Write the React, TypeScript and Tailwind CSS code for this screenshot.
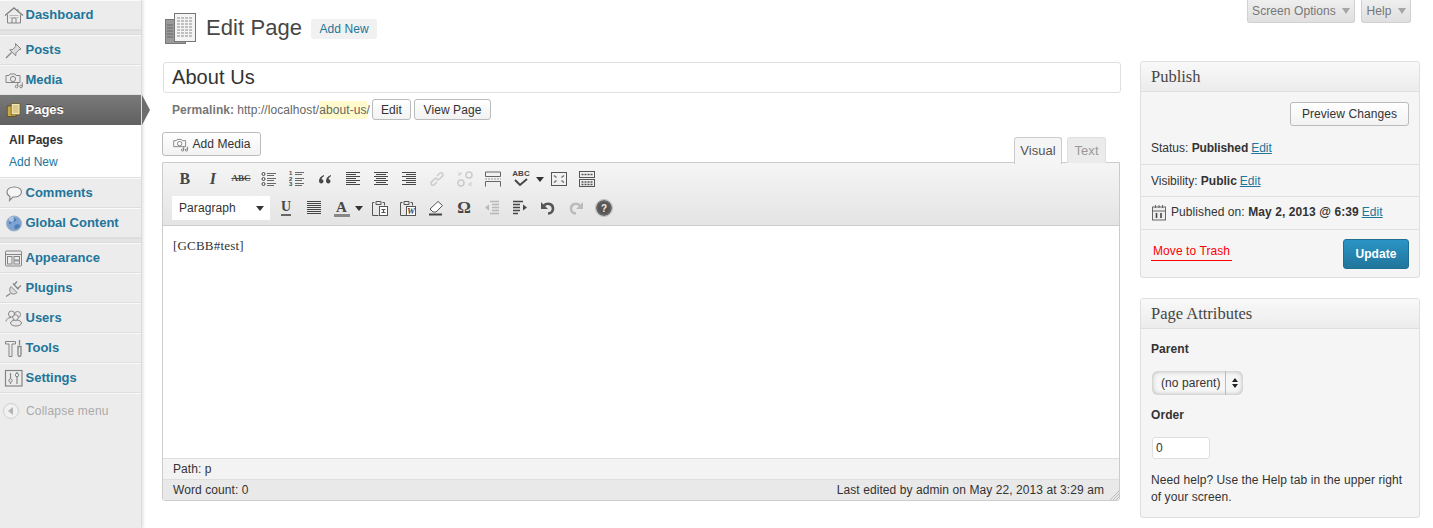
import type { ReactNode } from "react";

const sans = "font-['Liberation_Sans',Arial,sans-serif]";
const serif = "font-['Liberation_Serif',Georgia,serif]";

function Ico({ children, size = 20, box = 20, className = "" }: { children: ReactNode; size?: number; box?: number; className?: string }) {
  return (
    <svg width={size} height={size} viewBox={`0 0 ${box} ${box}`} fill="none" stroke="currentColor" strokeWidth="1" className={className}>
      {children}
    </svg>
  );
}

// sidebar icons, all grey outlines
const menuIcons: Record<string, ReactNode> = {
  dashboard: (
    <>
      <path d="M1 10.500 10 3l9 7.500" strokeWidth="1.400" />
      <path d="M3.500 9.500V18h13V9.500M8 18v-5h4v5M14 4v3" />
      <path d="M5.500 10.500h9M5.500 12.500h2M12.500 12.500h2" opacity=".5" />
    </>
  ),
  posts: (
    <>
      <path d="M11.500 3.500 17 9l-2 .8-3 3-.3 3-6-6 3-.3 3-3z" fill="#dcdcdc" />
      <path d="M7.500 12.500 2 18" strokeWidth="1.200" />
    </>
  ),
  media: (
    <>
      <path d="M2 5.500h3l1-1.500h5l1 1.500h4v7H2z" />
      <circle cx="9" cy="9" r="2.600" />
      <circle cx="12.500" cy="16.500" r="1.300" />
      <circle cx="17" cy="16.500" r="1.300" />
      <path d="M13.800 16.500V12.500M18.300 16.500V12.500" />
    </>
  ),
  comments: (
    <>
      <path d="M10.500 4c4 0 7 2.100 7 5s-3 5-7 5H9l-3.500 3.500.5-4c-2-.8-3-2.500-3-4.500 0-2.900 3-5 7-5z" fill="#f5f5f5" strokeWidth="1.100" />
    </>
  ),
  appearance: (
    <>
      <rect x="1.500" y="3" width="16" height="15" rx="1" />
      <path d="M1.500 6.500h16" />
      <rect x="3.500" y="8.500" width="4.500" height="7.500" />
      <rect x="10" y="8.500" width="5.500" height="3.500" />
      <rect x="10" y="13" width="5.500" height="3" />
    </>
  ),
  plugins: (
    <>
      <path d="M7 8.500 13 14.500c-2 2-4.500 2-6 .5s-2-4 0-6.500z" fill="#ddd" />
      <path d="M10 7l3-3.500M13.500 10.500l3.500-3M6.500 15.500 2 18.500M9 5.500l5.500 6" strokeWidth="1.200" />
    </>
  ),
  users: (
    <>
      <circle cx="7.500" cy="6" r="3" />
      <circle cx="13.500" cy="6.500" r="3" />
      <path d="M2 13.500c0-2.500 2.500-4 5-4" />
      <ellipse cx="12" cy="15" rx="5.500" ry="3" fill="#e8e8e8" />
      <circle cx="11.500" cy="9.500" r="2.800" fill="#ececec" />
    </>
  ),
  tools: (
    <>
      <path d="M1.500 3.500h10v2.500h-3.500v12.500h-3V6H1.500z" />
      <path d="M14 8.500h3v8c0 2.500-3 2.500-3 0zM15.500 2v5" strokeWidth="1.300" />
    </>
  ),
  settings: (
    <>
      <rect x="1.500" y="2.500" width="16.500" height="15.500" strokeWidth="1.200" />
      <circle cx="6.500" cy="12.500" r="1.700" />
      <circle cx="13" cy="7" r="1.700" />
      <path d="M6.500 5v5.500M6.500 14.500V16M13 9v7M13 4v1" strokeWidth="1.200" />
    </>
  ),
};

function PagesIcon() {
  return (
    <svg width="16" height="16" viewBox="0 0 20 20" className="mx-[2px] shrink-0">
      <rect x="1.500" y="5" width="11" height="13" fill="#c9a94a" stroke="#5b4a1c" />
      <rect x="6.500" y="2" width="11" height="14" fill="#f4e7b0" stroke="#6b5a24" />
      <path d="M8.500 5h7M8.500 7.500h7M8.500 10h7M8.500 12.500h7" stroke="#b49c55" />
    </svg>
  );
}

function GlobeIcon() {
  return (
    <svg width="20" height="20" viewBox="0 0 20 20" className="shrink-0">
      <circle cx="10" cy="10.500" r="7.500" fill="#7ea3d2" stroke="#9db0c6" />
      <path d="M5 7c3-3 6-2 7-1s-1 3-3 3-2 3-4 2zM11 12c2-1 4-1 5 0s-2 4-4 4-2-2-1-4z" fill="#4f7db5" />
      <circle cx="7.500" cy="6.500" r="2.500" fill="#cfe0f4" opacity=".7" />
    </svg>
  );
}

function MenuItem({ icon, label }: { icon: string; label: string }) {
  return (
    <div className="flex h-[30px] items-center border-t border-t-[#f9f9f9] border-b border-b-[#dfdfdf] pb-[1px] pl-[4px]">
      {icon === "globe" ? (
        <GlobeIcon />
      ) : (
        <Ico className="shrink-0 text-[#858585]">{menuIcons[icon]}</Ico>
      )}
      <span className="ml-[1.500px] text-[13px] font-bold text-[#21759b]">{label}</span>
    </div>
  );
}

function MenuSeparator() {
  return <div className="h-[5px] border-y border-[#dcdcdc] bg-[#e4e4e4]" />;
}

function Sidebar() {
  return (
    <aside className="relative h-[528px] w-[142px] shrink-0 border-r border-[#dcdcdc] bg-[#ececec] shadow-[1px_0_3px_rgba(0,0,0,0.14)]">
      <MenuItem icon="dashboard" label="Dashboard" />
      <MenuSeparator />
      <MenuItem icon="posts" label="Posts" />
      <MenuItem icon="media" label="Media" />
      <div className="relative flex h-[30px] items-center bg-linear-to-b from-[#7a7a7a] to-[#606060] pl-[4px]">
        <PagesIcon />
        <span className="ml-[1.500px] text-[13px] font-bold text-white [text-shadow:0_-1px_0_rgba(0,0,0,0.4)]">Pages</span>
        <div className="absolute top-0 right-[-9px] h-0 w-0 border-y-[15px] border-l-[8px] border-y-transparent border-l-[#6d6d6d]" />
      </div>
      <div className="h-[53px] border-b border-[#dfdfdf] bg-white pt-[6px] pl-[9px] text-[12px]">
        <div className="h-[22px] leading-[18px] font-bold text-[#333]">All Pages</div>
        <div className="leading-[18px] text-[#21759b]">Add New</div>
      </div>
      <MenuItem icon="comments" label="Comments" />
      <MenuItem icon="globe" label="Global Content" />
      <MenuSeparator />
      <MenuItem icon="appearance" label="Appearance" />
      <MenuItem icon="plugins" label="Plugins" />
      <MenuItem icon="users" label="Users" />
      <MenuItem icon="tools" label="Tools" />
      <MenuItem icon="settings" label="Settings" />
      <div className="flex h-[36px] items-center border-t border-[#f9f9f9] pb-[2px] pl-[3px] text-[12px] tracking-[0.2px] text-[#aaa]">
        <span className="flex h-[16px] w-[16px] items-center justify-center rounded-full border border-[#cfcfcf] bg-[#f1f1f1]">
          <span className="mr-[2px] h-0 w-0 border-y-[4px] border-r-[5px] border-y-transparent border-r-[#b5b5b5]" />
        </span>
        <span className="ml-[7px]">Collapse menu</span>
      </div>
    </aside>
  );
}

function Btn({ children, className = "" }: { children: ReactNode; className?: string }) {
  return (
    <span className={`inline-flex items-center justify-center rounded-[3px] border border-[#bbb] bg-linear-to-b from-white to-[#f2f2f2] text-[12px] text-[#333] ${className}`}>
      {children}
    </span>
  );
}

function Caret() {
  return <span className="inline-block h-0 w-0 border-x-[4px] border-t-[5px] border-x-transparent border-t-[#333]" />;
}

function TextBtn({ children, width = "w-[28px]", className = "" }: { children: ReactNode; width?: string; className?: string }) {
  return <span className={`flex h-[28px] shrink-0 items-center justify-center text-[#464646] ${width} ${className}`}>{children}</span>;
}

function Lines({ rows }: { rows: [number, number][] }) {
  return (
    <svg width="16" height="16" viewBox="0 0 16 16" stroke="#464646" strokeWidth="1">
      {rows.map(([a, b], i) => (
        <path key={i} d={`M${a} ${1.500 + i * 2}H${b}`} />
      ))}
    </svg>
  );
}

function ToolbarRowOne() {
  return (
    <div className="flex h-[28px] items-center pl-[8px]">
      <TextBtn><span className={`${serif} text-[16px] font-bold`}>B</span></TextBtn>
      <TextBtn><span className={`${serif} text-[16px] font-bold italic`}>I</span></TextBtn>
      <TextBtn><span className={`${serif} text-[9px] font-bold line-through`}>ABC</span></TextBtn>
      <TextBtn>
        <svg width="16" height="16" viewBox="0 0 16 16" fill="none" stroke="#464646">
          <circle cx="2.500" cy="3" r="1.500" />
          <circle cx="2.500" cy="8" r="1.500" />
          <circle cx="2.500" cy="13" r="1.500" />
          <path d="M6 2.500h9M6 4.500h7M6 7.500h9M6 9.500h7M6 12.500h9M6 14.500h7" strokeWidth=".8" />
        </svg>
      </TextBtn>
      <TextBtn>
        <span className="relative flex h-[16px] w-[16px] flex-col text-[6px] leading-[5.500px] font-bold">
          <span>1</span>
          <span>2</span>
          <span>3</span>
          <svg width="16" height="16" viewBox="0 0 16 16" stroke="#464646" className="absolute top-0 left-0">
            <path d="M6 1.500h9M6 3.500h7M6 7.500h9M6 9.500h7M6 12.500h9M6 14.500h7" strokeWidth=".8" />
          </svg>
        </span>
      </TextBtn>
      <TextBtn>
        <svg width="14" height="14" viewBox="0 0 14 14" fill="#464646">
          <path d="M6 3C3 4 1 6 1 9c0 1.500 1 2.500 2.300 2.500S5.500 10.500 5.500 9.300 4.600 7.300 3.600 7.300c.2-1.300 1-2.300 2.400-3zM13 3c-3 1-5 3-5 6 0 1.500 1 2.500 2.300 2.500s2.200-1 2.200-2.200-.9-2-1.900-2c.2-1.300 1-2.300 2.400-3z" />
        </svg>
      </TextBtn>
      <TextBtn><Lines rows={[[1, 15], [1, 11], [1, 15], [1, 11], [1, 15], [1, 11], [1, 15]]} /></TextBtn>
      <TextBtn><Lines rows={[[1, 15], [3, 13], [1, 15], [3, 13], [1, 15], [3, 13], [1, 15]]} /></TextBtn>
      <TextBtn><Lines rows={[[1, 15], [5, 15], [1, 15], [5, 15], [1, 15], [5, 15], [1, 15]]} /></TextBtn>
      <TextBtn className="opacity-30">
        <svg width="18" height="18" viewBox="0 0 18 18" fill="none" stroke="#777" strokeWidth="1.500">
          <path d="M9 6l3-3c1.500-1 3.500.5 3 2.500l-3.500 3.500c-1 1-2 1-3 .5M9 12l-3 3c-1.500 1-3.500-.5-3-2.500L6.500 9c1-1 2-1 3-.5" />
        </svg>
      </TextBtn>
      <TextBtn className="opacity-30">
        <svg width="18" height="18" viewBox="0 0 18 18" fill="none" stroke="#777" strokeWidth="1.500">
          <circle cx="13" cy="5" r="3" />
          <circle cx="5" cy="13" r="3" />
          <path d="M2 2l3 3M5 2v2M2 5h2M16 16l-3-3M13 16v-2M16 13h-2" strokeWidth="1" />
        </svg>
      </TextBtn>
      <TextBtn>
        <svg width="16" height="16" viewBox="0 0 16 16" fill="none" stroke="#666">
          <path d="M.5 1h15v4.500H.5zM.5 15.500V10.500h15v5" />
          <path d="M0 8h16" strokeDasharray="2 1" stroke="#999" />
        </svg>
      </TextBtn>
      <TextBtn>
        <span className="relative flex h-[18px] w-[18px] flex-col items-center">
          <span className="text-[8px] leading-[8px] font-bold">ABC</span>
          <svg width="16" height="10" viewBox="0 0 16 10" fill="none" stroke="#464646" strokeWidth="2">
            <path d="M2 2l5 5 7-6" />
          </svg>
        </span>
      </TextBtn>
      <span className="flex w-[10px] shrink-0 items-center justify-center"><Caret /></span>
      <TextBtn>
        <svg width="16" height="16" viewBox="0 0 16 16" fill="none" stroke="#555">
          <rect x=".5" y="1.500" width="15" height="13" />
          <path d="M3 4.500l2.500 2M13 4.500l-2.500 2M3 11.500l2.500-2M13 11.500l-2.500-2" strokeWidth="1.600" stroke="#777" />
        </svg>
      </TextBtn>
      <TextBtn>
        <svg width="16" height="16" viewBox="0 0 16 16" fill="none" stroke="#555">
          <rect x=".5" y=".5" width="15" height="6" />
          <rect x=".5" y="8.500" width="15" height="7" />
          <path d="M2.500 3.500h11M2.500 11h11M2.500 13.500h11" strokeDasharray="2 1" strokeWidth="1.400" />
        </svg>
      </TextBtn>
    </div>
  );
}

function ToolbarRowTwo() {
  return (
    <div className="mt-[1px] flex h-[28px] items-center pl-[9px]">
      <span className="flex h-[24px] w-[98px] shrink-0 items-center justify-between bg-white pr-[6px] pl-[7px] text-[12px] text-[#333]">
        Paragraph
        <Caret />
      </span>
      <span className="w-[2px] shrink-0" />
      <TextBtn>
        <span className={`${serif} border-b-2 border-[#666] text-[14px] leading-[14px] font-bold`}>U</span>
      </TextBtn>
      <TextBtn><Lines rows={[[1, 15], [1, 15], [1, 15], [1, 15], [1, 15], [1, 15], [1, 15]]} /></TextBtn>
      <TextBtn width="w-[27px]">
        <span className={`${serif} w-[16px] border-b-[3px] border-[#888] text-center text-[15px] leading-[14px] font-bold`}>A</span>
      </TextBtn>
      <span className="flex w-[11px] shrink-0 items-center justify-start"><Caret /></span>
      <TextBtn>
        <svg width="16" height="18" viewBox="0 0 16 18" fill="none" stroke="#555">
          <path d="M2.500 3.500H.5v13h6M10.500 3.500h2v3M4 2.500h5v3H4z" />
          <rect x="7.500" y="7.500" width="8" height="9" fill="#fff" />
          <path d="M9.500 10.500h4M9.500 13.500h4M11.500 10.500v3" strokeWidth="1.200" />
        </svg>
      </TextBtn>
      <TextBtn>
        <span className="relative flex h-[18px] w-[16px]">
          <svg width="16" height="18" viewBox="0 0 16 18" fill="none" stroke="#555">
            <path d="M2.500 3.500H.5v13h6M10.500 3.500h2v3M4 2.500h5v3H4z" />
            <rect x="6.500" y="7.500" width="9" height="9" fill="#fff" />
          </svg>
          <span className={`${serif} absolute top-[7px] left-[7px] text-[9px] leading-[10px] font-bold italic`}>W</span>
        </span>
      </TextBtn>
      <TextBtn>
        <svg width="16" height="16" viewBox="0 0 16 16">
          <path d="M10 1.500l4.500 4-6.500 6.500H5L2 9z" fill="#fff" stroke="#555" />
          <path d="M1 14.500h13" stroke="#444" strokeWidth="2" />
        </svg>
      </TextBtn>
      <TextBtn><span className={`${serif} text-[17px] font-bold`}>Ω</span></TextBtn>
      <TextBtn className="opacity-30">
        <svg width="16" height="16" viewBox="0 0 16 16" stroke="#464646" fill="#464646">
          <path d="M6 1.500h9M8 4.500h7M8 7.500h7M8 10.500h7M6 13.500h9" strokeWidth="1.300" />
          <path d="M1 7.500l4-3v6z" stroke="none" />
        </svg>
      </TextBtn>
      <TextBtn>
        <svg width="16" height="16" viewBox="0 0 16 16" stroke="#464646" fill="#464646">
          <path d="M1 1.500h10M1 4.500h7M1 7.500h7M1 10.500h7M1 13.500h5" strokeWidth="1.300" />
          <path d="M15 7.500l-4-3v6z" stroke="none" />
        </svg>
      </TextBtn>
      <TextBtn>
        <svg width="16" height="16" viewBox="0 0 16 16" fill="none">
          <path d="M4 5.500c3-3 9-2 9 3 0 3-2 5-5 5" stroke="#555" strokeWidth="2.600" />
          <path d="M1 2v7h7z" fill="#555" />
        </svg>
      </TextBtn>
      <TextBtn className="opacity-30">
        <svg width="16" height="16" viewBox="0 0 16 16" fill="none">
          <path d="M12 5.500c-3-3-9-2-9 3 0 3 2 5 5 5" stroke="#555" strokeWidth="2.600" />
          <path d="M15 2v7H8z" fill="#555" />
        </svg>
      </TextBtn>
      <TextBtn>
        <span className="flex h-[16px] w-[16px] items-center justify-center rounded-full border-[2px] border-[#666] bg-[#555] text-[10px] font-bold text-[#eee] outline outline-[#bbb]">?</span>
      </TextBtn>
    </div>
  );
}

function Editor() {
  return (
    <div className="h-[339px] w-[958px] overflow-hidden rounded-b-[3px] border border-[#cccccc]">
      <div className="h-[63px] border-b border-[#cccccc] bg-linear-to-b from-[#f5f5f5] to-[#e4e4e4] pt-[2px]">
        <ToolbarRowOne />
        <ToolbarRowTwo />
      </div>
      <div className={`${serif} h-[232px] bg-white pt-[11px] pl-[10px] text-[13px] leading-[18px] tracking-[0.2px] text-[#333]`}>[GCBB#test]</div>
      <div className="flex h-[21px] items-center border-t border-[#dfdfdf] bg-[#f3f3f3] pl-[10px] text-[12px] text-[#333]">Path: p</div>
      <div className="relative flex h-[21px] items-center justify-between border-t border-[#dfdfdf] bg-[#e9e9e9] pr-[15px] pl-[10px] text-[12px] text-[#333]">
        <span>Word count: 0</span>
        <span>Last edited by admin on May 22, 2013 at 3:29 am</span>
        <svg width="10" height="10" viewBox="0 0 10 10" stroke="#bbb" className="absolute right-0 bottom-0">
          <path d="M1 10 10 1M4 10l6-6M7 10l3-3" />
        </svg>
      </div>
    </div>
  );
}

function MainColumn() {
  return (
    <div className="w-[959px] shrink-0">
      <div className="flex h-[62px] items-start">
        <svg width="34" height="34" viewBox="0 0 34 34" className="mt-[12px] ml-[3px] shrink-0">
          <rect x=".5" y="7.500" width="20" height="24" fill="#9a9a9a" stroke="#777" />
          <rect x="9.500" y="1.500" width="21" height="28" fill="#f4f4f4" stroke="#777" />
          <path d="M12 6h16M12 9h16M12 12h16M12 15h16M12 18h16M12 21h16M12 24h16" stroke="#8c8c8c" strokeDasharray="3 1" />
          <path d="M2 13h6M2 16h6M2 19h6M2 22h6M2 25h6" stroke="#666" />
        </svg>
        <h1 className="mt-[12px] ml-[7px] text-[22px] leading-[32px] text-[#464646]">Edit Page</h1>
        <span className="mt-[19px] ml-[9px] flex h-[20px] w-[66px] items-center justify-center rounded-[3px] bg-[#f1f1f1] text-[12px] text-[#21759b]">Add New</span>
      </div>
      <div className="ml-[1px] flex h-[31px] items-center rounded-[3px] border border-[#dfdfdf] bg-white pb-[2px] pl-[8px] text-[20px] text-[#333]">About Us</div>
      <div className="mt-[6px] ml-[10px] flex h-[21px] items-center text-[12px] text-[#666]">
        <span className="font-bold text-[#777]">Permalink:</span>
        <span className="ml-[3px]">http://localhost/</span>
        <span className="bg-[#fffbcc]">about-us</span>
        <span>/</span>
        <Btn className="ml-[2px] h-[21px] w-[39px]">Edit</Btn>
        <Btn className="ml-[3px] h-[21px] w-[77px]">View Page</Btn>
      </div>
      <div className="mt-[12px] flex h-[31px] items-start justify-between">
        <Btn className="h-[24px] w-[99px]">
          <Ico size={17} className="mr-[3px] text-[#777]">{menuIcons.media}</Ico>
          Add Media
        </Btn>
        <div className="mt-[5px] mr-[15px] flex items-start text-[13px]">
          <span className="flex h-[27px] w-[48px] items-center justify-center rounded-t-[3px] border border-b-0 border-[#cccccc] bg-[#f5f5f5] text-[#555]">Visual</span>
          <span className="ml-[5px] flex h-[26px] w-[39px] items-center justify-center rounded-t-[3px] border border-b-0 border-[#dfdfdf] bg-[#ebebeb] text-[#999]">Text</span>
        </div>
      </div>
      <div className="-mt-[1px]">
        <Editor />
      </div>
    </div>
  );
}

function Row({ children }: { children: ReactNode }) {
  return (
    <div className="flex items-center border-b border-[#dfdfdf] px-[10px] text-[12px] text-[#333]">
      {children}
    </div>
  );
}

function EditLink() {
  return <span className="ml-[3px] text-[#21759b] underline">Edit</span>;
}

function BoxHeader({ title }: { title: string }) {
  return (
    <div className={`${serif} flex h-[30px] items-center border-b border-[#dfdfdf] bg-linear-to-b from-[#f9f9f9] to-[#ececec] pt-[1px] pl-[10px] text-[16.500px] tracking-normal text-[#464646]`}>{title}</div>
  );
}

function RightColumn() {
  return (
    <div className="ml-[19px] w-[280px] shrink-0">
      <div className="h-[61px]" />
      <div className="h-[217px] overflow-hidden rounded-[3px] border border-[#dfdfdf] bg-[#f5f5f5]">
        <BoxHeader title="Publish" />
        <div className="flex h-[41px] items-start justify-end pt-[10px] pr-[10px]">
          <Btn className="h-[24px] w-[119px]">Preview Changes</Btn>
        </div>
        <Row>
          <span className="flex h-[31px] items-center pb-[2px] tracking-normal">Status:&nbsp;<b className="-tracking-[0.1px]">Published</b><EditLink /></span>
        </Row>
        <Row>
          <span className="flex h-[31px] items-center tracking-normal">Visibility:&nbsp;<b>Public</b><EditLink /></span>
        </Row>
        <Row>
          <span className="flex h-[32px] items-center pb-[2px]">
            <svg width="16" height="17" viewBox="0 0 16 17" className="mr-[4px]" fill="none" stroke="#666">
              <rect x="1.500" y="3" width="13" height="13" fill="#eee" />
              <path d="M1.500 7h13M4.500 1v3M8 1v3M11.500 1v3" />
              <path d="M5.500 9v5M10 9v5" strokeWidth="1.600" stroke="#444" />
            </svg>
            Published on:&nbsp;<b>May 2, 2013 @ 6:39</b><EditLink />
          </span>
        </Row>
        <div className="flex h-[50px] items-start justify-between px-[10px] pt-[9px] text-[12px]">
          <span className="mt-[4px] border-b border-[#ff0000] px-[2px] leading-[17px] text-[#ff0000]">Move to Trash</span>
          <span className="flex h-[30px] w-[66px] items-center justify-center rounded-[3px] border border-[#1f6f93] bg-linear-to-b from-[#2a95c5] to-[#21759b] font-bold text-white">Update</span>
        </div>
      </div>
      <div className="mt-[20px] h-[220px] overflow-hidden rounded-[3px] border border-[#dfdfdf] bg-[#f5f5f5] text-[12px] text-[#333]">
        <BoxHeader title="Page Attributes" />
        <div className="pt-[11px] pl-[10px]">
          <div className="leading-[18px] font-bold">Parent</div>
          <div className="mt-[13px] ml-[1px] flex h-[24px] w-[91px] items-center rounded-[6px] bg-[#f6f6f6] pl-[9px] shadow-[inset_0_0_5px_rgba(0,0,0,0.3)]">
            <span className="w-[64px] whitespace-nowrap">(no parent)</span>
            <span className="flex h-full w-[18px] flex-col items-center justify-center gap-[2px] border-l border-[#bbb]">
              <span className="h-0 w-0 border-x-[3px] border-b-[4px] border-x-transparent border-b-[#222]" />
              <span className="h-0 w-0 border-x-[3px] border-t-[4px] border-x-transparent border-t-[#222]" />
            </span>
          </div>
          <div className="mt-[11px] leading-[18px] font-bold">Order</div>
          <div className="mt-[13px] ml-[1px] flex h-[22px] w-[58px] items-center rounded-[3px] border border-[#dfdfdf] bg-white pl-[3px]">0</div>
          <p className="mt-[13px] w-[258px] leading-[17px]">Need help? Use the Help tab in the upper right of your screen.</p>
        </div>
      </div>
    </div>
  );
}

function ScreenTab({ label, className }: { label: string; className: string }) {
  return (
    <span className={`flex h-[23px] items-center justify-center gap-[6px] rounded-b-[3px] border border-t-0 border-[#d1d1d1] bg-linear-to-b from-[#efefef] to-[#dfdfdf] text-[12px] text-[#777] ${className}`}>
      {label}
      <span className="h-0 w-0 border-x-[4px] border-t-[6px] border-x-transparent border-t-[#a5a5a5]" />
    </span>
  );
}

export default function App() {
  return (
    <div className={`${sans} relative flex h-[528px] w-[1433px] overflow-hidden bg-white`}>
      <Sidebar />
      <main className="ml-[20px] flex items-start tracking-[0.08px]">
        <MainColumn />
        <RightColumn />
      </main>
      <div className="absolute top-0 right-[22px] flex gap-[6px] tracking-[0.08px]">
        <ScreenTab label="Screen Options" className="w-[108px]" />
        <ScreenTab label="Help" className="w-[50px]" />
      </div>
    </div>
  );
}
